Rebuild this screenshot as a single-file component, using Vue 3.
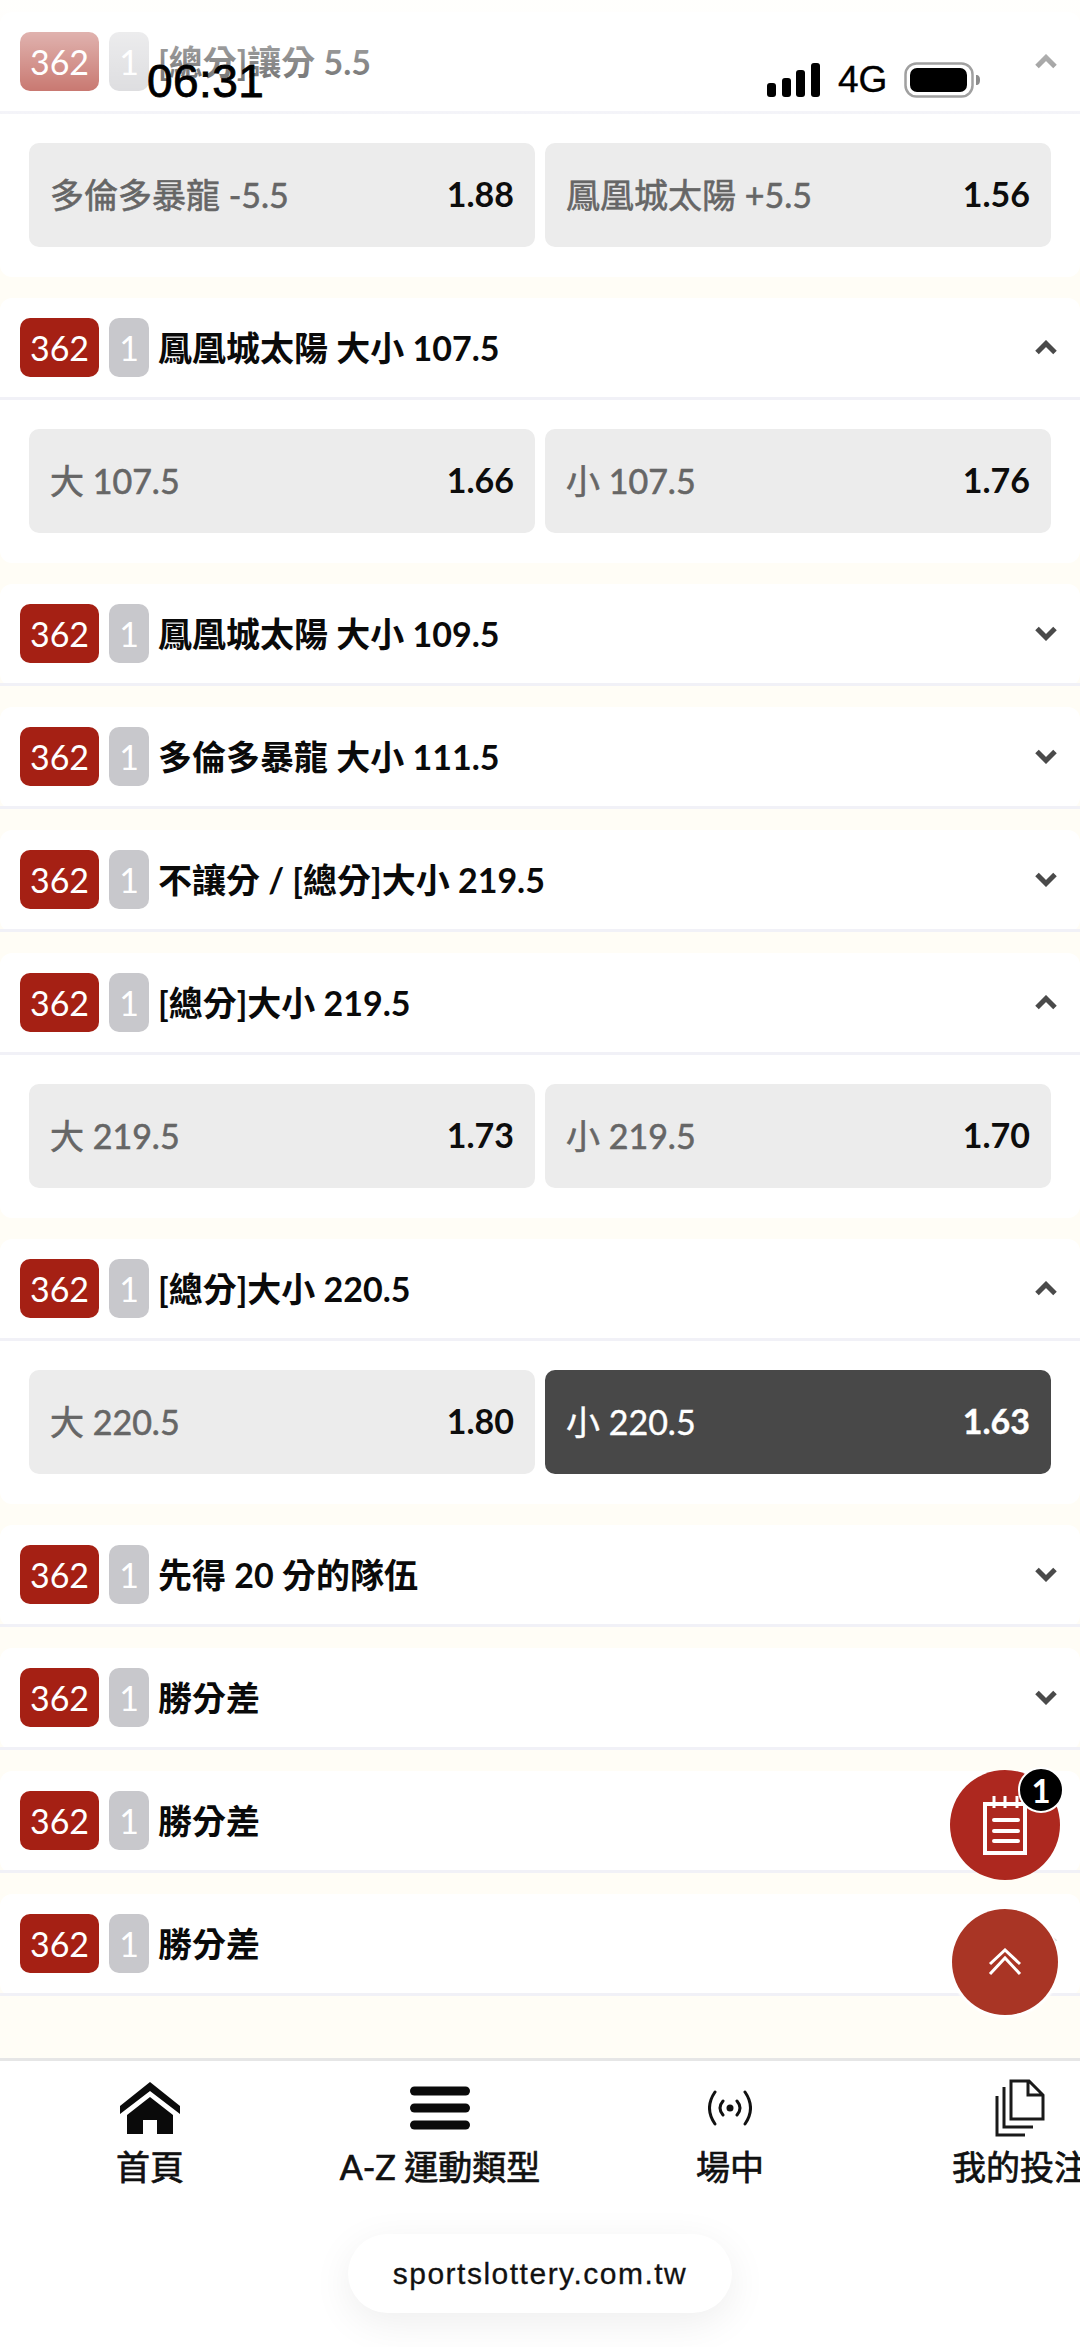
<template>
  <div class="page">
    <div class="market-list">
      <section v-for="m in markets" :key="m.id" class="market">
        <header class="market-head">
          <span class="code">362</span>
          <span class="level">1</span>
          <span class="market-title">{{ m.title }}</span>
          <svg class="chevron" :class="{ open: m.odds }" width="24" height="15" viewBox="0 0 24 15">
            <path d="M3 12.5 12 3.500 21 12.500" fill="none" stroke="#4a4a4a" stroke-width="5" />
          </svg>
        </header>
        <div v-if="m.odds" class="market-body">
          <div v-for="o in m.odds" :key="o.label" class="odd" :class="{ selected: o.selected }">
            <span class="odd-label">{{ o.label }}</span>
            <span class="odd-value">{{ o.value }}</span>
          </div>
        </div>
      </section>
    </div>

    <nav class="tabbar">
      <div class="tabs">
        <div class="tab">
          <div class="tab-icon">
            <svg width="60" height="53" viewBox="0 0 60 53" fill="#0a0a0a">
              <path d="M30 0 60 24V32L30 9 0 32V24Z" />
              <path d="M30 15 53 33V52H37V38H23V52H7V33Z" />
            </svg>
          </div>
          <span class="tab-label">首頁</span>
        </div>
        <div class="tab">
          <div class="tab-icon">
            <svg width="60" height="44" viewBox="0 0 60 44" fill="#0a0a0a">
              <rect x="0" y="0.500" width="60" height="9" rx="4.500" />
              <rect x="0" y="17.500" width="60" height="9" rx="4.500" />
              <rect x="0" y="34.500" width="60" height="9" rx="4.500" />
            </svg>
          </div>
          <span class="tab-label">A-Z 運動類型</span>
        </div>
        <div class="tab">
          <div class="tab-icon">
            <svg width="44" height="36" viewBox="0 0 44 36" fill="none" stroke="#111" stroke-width="3" stroke-linecap="round">
              <path d="M7 2Q-4 18 7 34M37 2Q48 18 37 34M15 11Q9 18 15 25M29 11Q35 18 29 25" />
              <circle cx="22" cy="18" r="3.500" fill="#111" stroke="none" />
            </svg>
          </div>
          <span class="tab-label">場中</span>
        </div>
        <div class="tab">
          <div class="tab-icon">
            <svg width="50" height="58" viewBox="0 0 50 58" fill="none" stroke="#1a1a1a" stroke-width="3">
              <path d="M16 2H34L48 16V40H16ZM33 2V16H48M9 8V48H38M2 17V56H30" />
            </svg>
          </div>
          <span class="tab-label">我的投注</span>
        </div>
      </div>
      <div class="url-pill">sportslottery.com.tw</div>
    </nav>

    <!-- floating buttons -->
    <div class="fab fab-slip">
      <svg width="48" height="63" viewBox="0 0 48 63" fill="none" stroke="#fff" stroke-width="4">
        <path d="M4 10H44V59H4Z" />
        <path d="M13 2V14M24 2V14M36 2V14" stroke-width="3" />
        <path d="M13 26H37M13 37H37M13 47H37" stroke-linecap="round" />
      </svg>
      <span class="fab-count">1</span>
    </div>
    <div class="fab fab-top">
      <svg width="34" height="28" viewBox="0 0 34 28" fill="none" stroke="#fff" stroke-width="3">
        <path d="M2 16 17 2 32 16M2 26 17 10 32 26" />
      </svg>
    </div>

    <!-- ios status bar on top of the page -->
    <div class="top-fade"></div>
    <div class="status-time">06:31</div>
    <div class="status-right">
      <div class="signal">
        <i style="height: 14px"></i>
        <i style="height: 19px"></i>
        <i style="height: 27px"></i>
        <i style="height: 34px"></i>
      </div>
      <span class="network">4G</span>
      <svg width="77" height="36" viewBox="0 0 77 36">
        <rect x="1.500" y="1.500" width="67" height="33" rx="11" fill="none" stroke="#a0a0a0" stroke-width="2.500" />
        <rect x="6" y="6" width="57" height="24" rx="7" fill="#000" />
        <path d="M72 13C75 13 76 15 76 18S75 23 72 23Z" fill="#8c8c8c" />
      </svg>
    </div>
  </div>
</template>

<script setup>
const markets = [
  {
    id: 1,
    title: '[總分]讓分 5.5',
    odds: [
      { label: '多倫多暴龍 -5.5', value: '1.88' },
      { label: '鳳凰城太陽 +5.5', value: '1.56' }
    ]
  },
  {
    id: 2,
    title: '鳳凰城太陽 大小 107.5',
    odds: [
      { label: '大 107.5', value: '1.66' },
      { label: '小 107.5', value: '1.76' }
    ]
  },
  { id: 3, title: '鳳凰城太陽 大小 109.5' },
  { id: 4, title: '多倫多暴龍 大小 111.5' },
  { id: 5, title: '不讓分 / [總分]大小 219.5' },
  {
    id: 6,
    title: '[總分]大小 219.5',
    odds: [
      { label: '大 219.5', value: '1.73' },
      { label: '小 219.5', value: '1.70' }
    ]
  },
  {
    id: 7,
    title: '[總分]大小 220.5',
    odds: [
      { label: '大 220.5', value: '1.80' },
      { label: '小 220.5', value: '1.63', selected: true }
    ]
  },
  { id: 8, title: '先得 20 分的隊伍' },
  { id: 9, title: '勝分差' },
  { id: 10, title: '勝分差' },
  { id: 11, title: '勝分差' }
]
</script>

<style>
html,
body {
  margin: 0;
  background: #fffdf6;
}
</style>

<style scoped>
.page {
  position: relative;
  width: 1080px;
  height: 2347px;
  display: flex;
  flex-direction: column;
  overflow: hidden;
  background: #fffdf6;
  font-family: Lato, "Noto Sans CJK TC", sans-serif;
}

.market-list {
  height: 2058px;
  flex-shrink: 0;
  box-sizing: border-box;
  padding-top: 12px;
  display: flex;
  flex-direction: column;
  gap: 21px;
}

.market {
  background: #fff;
  border-radius: 12px;
}

.market-head {
  height: 102px;
  box-sizing: border-box;
  display: flex;
  align-items: center;
  padding: 0 22px 0 20px;
  border-bottom: 3px solid #f1f1f7;
}

.code,
.level {
  height: 59px;
  border-radius: 10px;
  color: #fff;
  font-size: 34px;
  line-height: 59px;
  text-align: center;
}

.code {
  width: 79px;
  background: #a52014;
}

.level {
  width: 40px;
  margin-left: 10px;
  background: #c8c8cc;
}

.market-title {
  flex: 1;
  margin-left: 9px;
  padding-bottom: 2px;
  font-size: 34px;
  font-weight: 700;
  color: #0a0a0a;
}

.chevron {
  transform: rotate(180deg);
}

.chevron.open {
  transform: none;
}

.market-body {
  display: flex;
  gap: 10px;
  padding: 29px 29px 30px;
}

.odd {
  flex: 1;
  height: 104px;
  box-sizing: border-box;
  padding: 0 21px 3px;
  display: flex;
  align-items: center;
  justify-content: space-between;
  background: #ececec;
  border-radius: 10px;
  font-size: 34px;
}

.odd-label {
  color: #666;
  -webkit-text-stroke: 0.6px #666;
}

.odd-value {
  color: #0d0d0d;
  font-weight: 700;
}

.odd.selected {
  background: #484848;
}

.odd.selected .odd-label,
.odd.selected .odd-value {
  color: #fff;
  -webkit-text-stroke: 0.4px #fff;
}

.tabbar {
  flex: 1;
  display: flex;
  flex-direction: column;
  background: #fff;
  border-top: 3px solid #e6e6e6;
  overflow: hidden;
}

.tabs {
  display: flex;
  padding: 17px 0 0 5px;
}

.tab {
  width: 290px;
  flex-shrink: 0;
  display: flex;
  flex-direction: column;
  align-items: center;
}

.tab-icon {
  height: 60px;
  display: flex;
  align-items: center;
  justify-content: center;
}

.tab-label {
  margin-top: 9px;
  font-size: 34px;
  line-height: 40px;
  color: #111;
  white-space: nowrap;
  -webkit-text-stroke: 0.7px #111;
}

.url-pill {
  align-self: center;
  width: 384px;
  height: 79px;
  margin-top: 47px;
  border-radius: 40px;
  background: #fff;
  box-shadow: 0 10px 40px rgba(0, 0, 0, 0.07);
  font-family: "Liberation Sans", sans-serif;
  font-size: 30px;
  letter-spacing: 1.5px;
  line-height: 79px;
  text-align: center;
  color: #111;
  -webkit-text-stroke: 0.3px #111;
}

.fab {
  position: absolute;
  display: flex;
  align-items: center;
  justify-content: center;
  border-radius: 50%;
}

.fab-slip {
  left: 950px;
  top: 1770px;
  width: 110px;
  height: 110px;
  background: #ad281f;
}

.fab-count {
  position: absolute;
  left: 68px;
  top: -3px;
  width: 42px;
  height: 42px;
  border: 2px solid #fff;
  border-radius: 50%;
  background: #000;
  color: #fff;
  font-size: 33px;
  font-weight: 700;
  line-height: 42px;
  text-align: center;
}

.fab-top {
  left: 952px;
  top: 1909px;
  width: 106px;
  height: 106px;
  background: #a93525;
  box-shadow: 0 0 2px 3px #fff;
}

.top-fade {
  position: absolute;
  left: 0;
  top: 0;
  width: 100%;
  height: 135px;
  background: linear-gradient(rgba(255, 255, 255, 0.8), rgba(255, 255, 255, 0.4) 67%, rgba(255, 255, 255, 0));
}

.status-time {
  position: absolute;
  left: 147px;
  top: 56px;
  font-family: "Liberation Sans", sans-serif;
  font-size: 46px;
  letter-spacing: 0.4px;
  line-height: 50px;
  color: #000;
  -webkit-text-stroke: 0.8px #000;
}

.status-right {
  position: absolute;
  left: 767px;
  top: 62px;
  display: flex;
  align-items: center;
}

.signal {
  width: 53px;
  height: 34px;
  display: flex;
  align-items: flex-end;
  justify-content: space-between;
}

.signal i {
  width: 9px;
  border-radius: 3px;
  background: #000;
}

.network {
  width: 47px;
  margin: 0 19px 0 18px;
  font-family: "Liberation Sans", sans-serif;
  font-size: 37px;
  line-height: 34px;
  color: #000;
  -webkit-text-stroke: 0.4px #000;
}
</style>
